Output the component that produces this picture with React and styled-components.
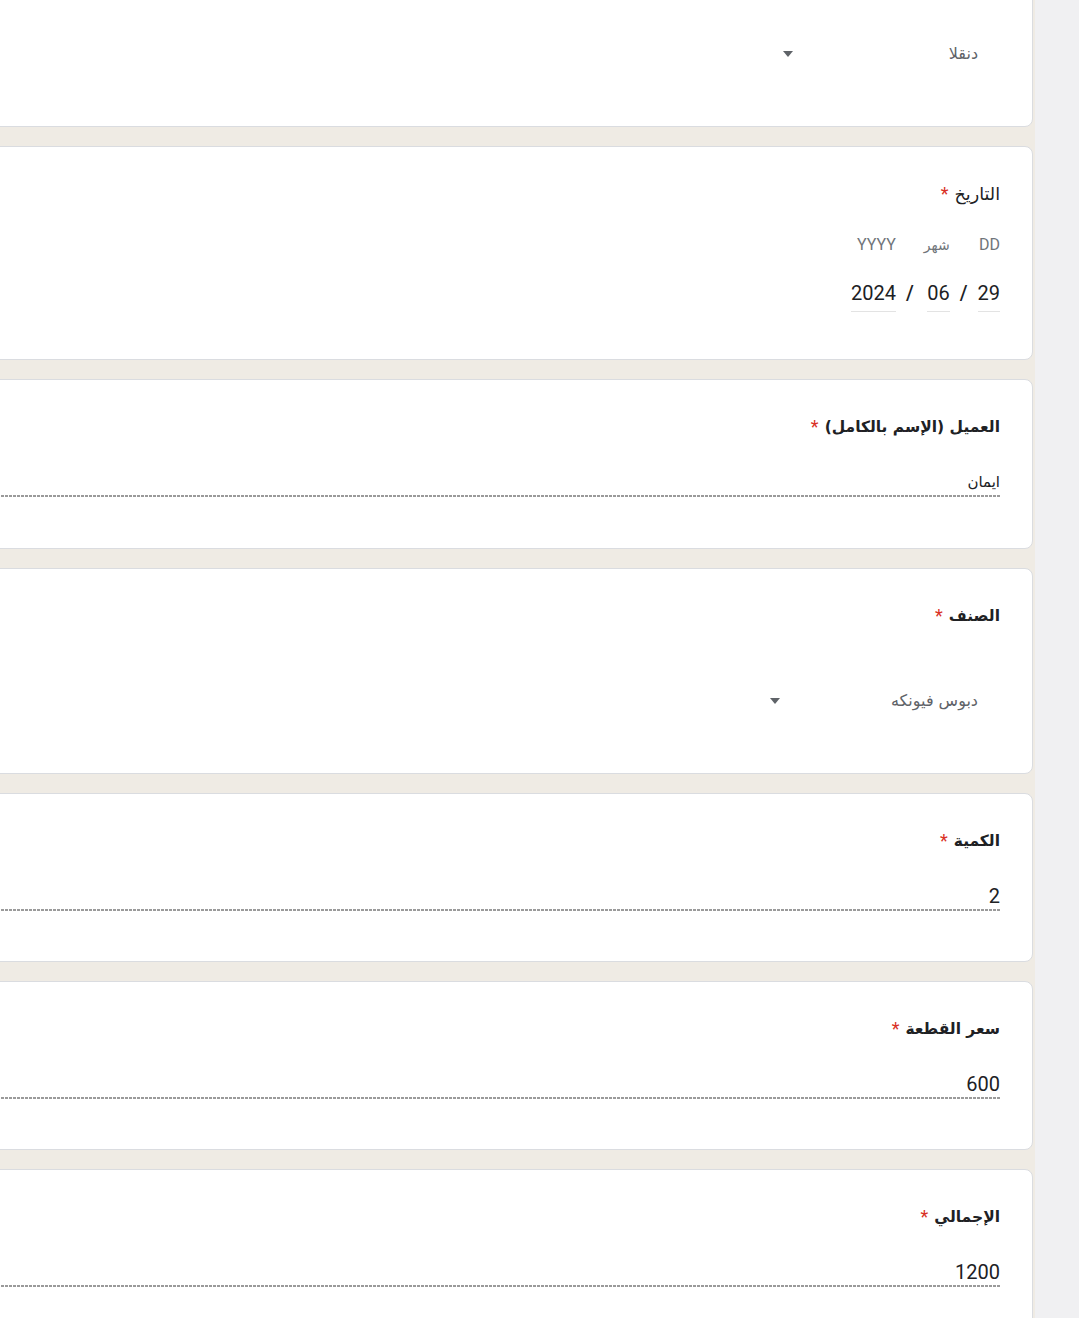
import styled, { createGlobalStyle } from 'styled-components'

const GlobalStyle = createGlobalStyle`
  html, body {
    margin: 0;
    padding: 0;
    background: #f1f1f3;
  }
  body {
    font-family: Roboto, "DejaVu Sans", sans-serif;
    color: #202124;
  }
`

const Page = styled.div`
  display: flex;
  height: 1318px;
  overflow: hidden;
`

const Main = styled.div`
  width: 1035px;
  background: #efebe4;
  overflow: hidden;
  direction: rtl;
`

const List = styled.div`
  display: flex;
  flex-direction: column;
  gap: 19px;
  margin-top: -79px;
`

const Card = styled.div`
  background: #fff;
  border: 1px solid #dadce0;
  border-radius: 8px;
  margin-right: 2px;
  margin-left: -20px;
  padding: 35px 32px 0 0;
  height: ${p => p.$h}px;
  box-sizing: border-box;
`

const Title = styled.div`
  display: flex;
  align-items: center;
  gap: 6px;
  font-family: "DejaVu Sans", sans-serif;
  font-size: ${p => (p.$light ? 17.5 : 15.5)}px;
  line-height: 24px;
  font-weight: ${p => (p.$light ? 400 : 700)};
  color: #202124;
`

const Star = styled.span`
  color: #d93025;
  font-family: Roboto, sans-serif;
  font-weight: 400;
  font-size: 18px;
`

const Field = styled.div`
  margin-top: 31px;
  display: flex;
  flex-direction: column;
`

const Value = styled.div`
  line-height: 24px;
  font-size: ${p => (p.$arabic ? 15 : 20)}px;
  font-family: ${p => (p.$arabic ? '"DejaVu Sans"' : 'Roboto')}, sans-serif;
  color: #202124;
  padding-bottom: 1px;
`

const Dotted = styled.div`
  height: 1.5px;
  background: repeating-linear-gradient(to left, #9a9a9a 0 3px, transparent 3px 4px);
`

const DateRow = styled.div`
  margin-top: 29px;
  display: flex;
  align-items: flex-end;
`

const DateCol = styled.div`
  display: flex;
  flex-direction: column;
  align-items: flex-start;
`

const DateLabel = styled.div`
  line-height: 20px;
  color: #70757a;
  font-family: Roboto, "DejaVu Sans", sans-serif;
  font-size: ${p => (p.$arabic ? 14 : 16)}px;
`

const DateValue = styled.div`
  margin-top: 26px;
  font-size: 20px;
  line-height: 24px;
  padding-bottom: 6px;
  border-bottom: 1px solid #e3e3e3;
  direction: ltr;
`

const Slash = styled.div`
  font-size: 20px;
  font-weight: 500;
  line-height: 24px;
  padding: 0 10px 7px;
`

const Select = styled.div`
  display: flex;
  align-items: center;
  justify-content: space-between;
  width: ${p => p.$w}px;
  height: 48px;
  margin-top: ${p => p.$top}px;
  padding: 0 22px 0 11px;
  box-sizing: border-box;
  font-family: "DejaVu Sans", sans-serif;
  font-size: 16px;
  color: #5f6368;
`

const Arrow = styled.span`
  width: 0;
  height: 0;
  border-left: 5.5px solid transparent;
  border-right: 5.5px solid transparent;
  border-top: 6px solid #5f6368;
  margin-top: 2px;
`

const Strip = styled.div`
  flex: 1;
  background: #f0f0f2;
`

const Required = ({ children, light }) => (
  <Title $light={light}>
    {children}
    <Star>*</Star>
  </Title>
)

const TextCard = ({ title, value, arabic, h = 169 }) => (
  <Card $h={h}>
    <Required>{title}</Required>
    <Field>
      <Value $arabic={arabic}>{value}</Value>
      <Dotted />
    </Field>
  </Card>
)

export default function App() {
  return (
    <Page>
      <GlobalStyle />
      <Main>
        <List>
          <Card $h={206}>
            <Select $w={228} $top={72}>
              <span>دنقلا</span>
              <Arrow />
            </Select>
          </Card>

          <Card $h={214}>
            <Required light>التاريخ</Required>
            <DateRow>
              <DateCol>
                <DateLabel>DD</DateLabel>
                <DateValue>29</DateValue>
              </DateCol>
              <Slash>/</Slash>
              <DateCol>
                <DateLabel $arabic>شهر</DateLabel>
                <DateValue>06</DateValue>
              </DateCol>
              <Slash>/</Slash>
              <DateCol>
                <DateLabel>YYYY</DateLabel>
                <DateValue>2024</DateValue>
              </DateCol>
            </DateRow>
          </Card>

          <TextCard title="العميل (الإسم بالكامل)" value="ايمان" arabic h={170} />

          <Card $h={206}>
            <Required>الصنف</Required>
            <Select $w={241} $top={48}>
              <span>دبوس فيونكه</span>
              <Arrow />
            </Select>
          </Card>

          <TextCard title="الكمية" value="2" />
          <TextCard title="سعر القطعة" value="600" />
          <TextCard title="الإجمالي" value="1200" />
        </List>
      </Main>
      <Strip />
    </Page>
  )
}
